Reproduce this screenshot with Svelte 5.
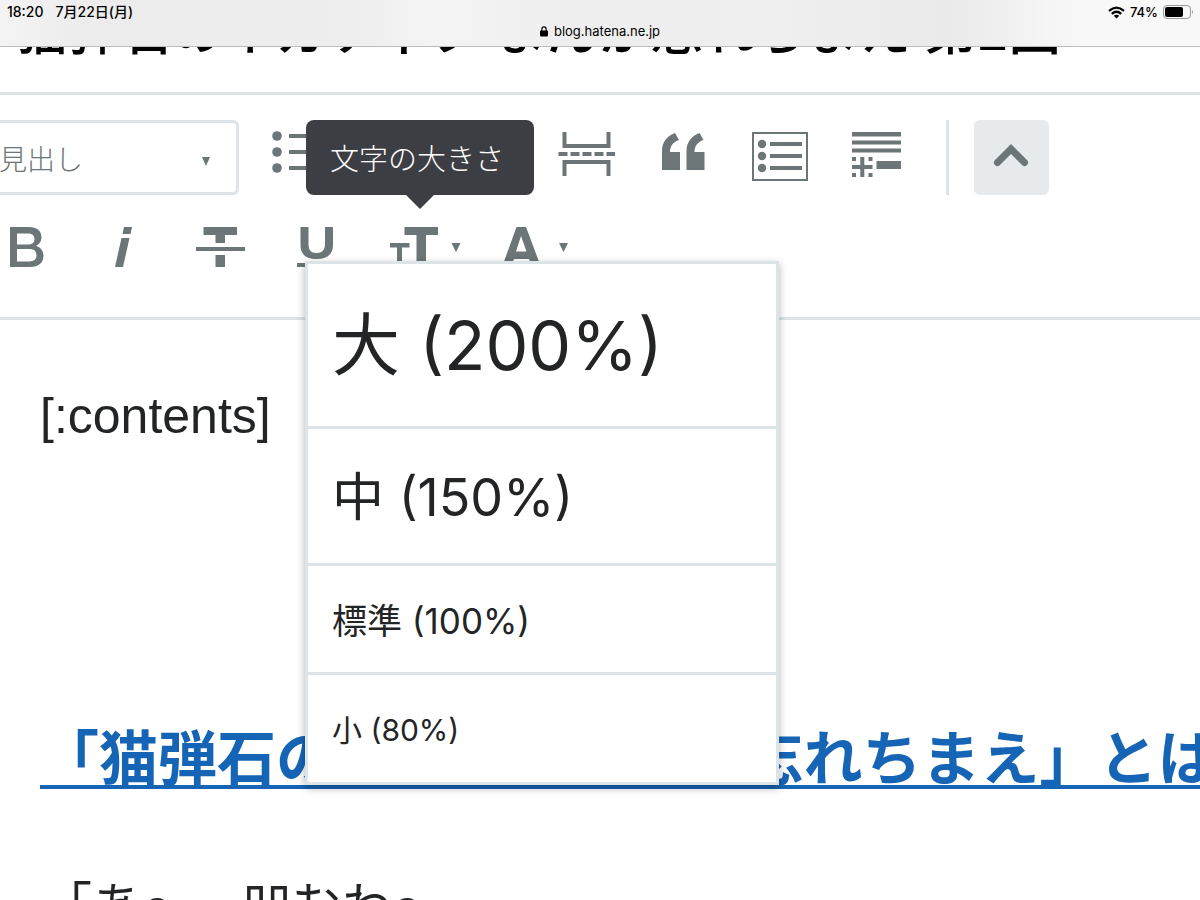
<script lang="ts">
  const sizes = [
    { label: '大 (200%)', cls: 'large' },
    { label: '中 (150%)', cls: 'medium' },
    { label: '標準 (100%)', cls: 'normal' },
    { label: '小 (80%)', cls: 'small' }
  ];
</script>

<div class="page">
  <header class="browser">
    <div class="status">
      <div class="clock"><span>18:20</span><span>7月22日(月)</span></div>
      <div class="power">
        <svg width="17" height="13" viewBox="0 0 17 13" aria-hidden="true">
          <g fill="none" stroke="#000" stroke-width="2.2">
            <path d="M1 4.9Q8.5 -1.7 16 4.9" />
            <path d="M3.8 7.8Q8.5 3.7 13.2 7.8" />
          </g>
          <path d="M5.8 9.8Q8.5 7.6 11.2 9.8L8.5 12.5Z" />
        </svg>
        <span>74%</span>
        <svg width="31" height="14" viewBox="0 0 31 14" aria-hidden="true">
          <rect x="0.5" y="0.5" width="27" height="13" rx="3.5" fill="none" stroke="#999" />
          <rect x="2" y="2" width="18" height="10" rx="2" />
          <path d="M29 5v4q2-2 0-4" fill="#999" />
        </svg>
      </div>
    </div>
    <div class="address">
      <svg width="8" height="11" viewBox="0 0 8 11" aria-hidden="true">
        <rect y="4.5" width="8" height="6" rx="1" />
        <path d="M1.9 5V3a2.1 2.2 0 0 1 4.2 0v2" fill="none" stroke="#000" stroke-width="1.2" />
      </svg>
      <span>blog.hatena.ne.jp</span>
    </div>
  </header>

  <div class="title"><h1>猫弾石のネガティブ まんが忘れちまえ 第2回</h1></div>

  <div class="toolbar">
    <div class="row">
      <button class="format"><span>見出し</span>
        <svg width="10" height="10" viewBox="0 0 10 10" aria-hidden="true"><path d="M1 0h8L5 9z" /></svg>
      </button>
      <button class="tool list" aria-label="リスト">
        <svg width="50" height="44" viewBox="0 0 50 44">
          <circle cx="5" cy="5" r="4.8" /><circle cx="5" cy="21" r="4.8" /><circle cx="5" cy="37" r="4.8" />
          <path d="M17 3h32v4H17zM17 19h32v4H17zM17 35h32v4H17z" />
        </svg>
      </button>
      <button class="tool more" aria-label="続きを読む">
        <svg width="58" height="46" viewBox="0 0 58 46">
          <path d="M6.5 1v14h44V1M6.5 45V31h44v14" fill="none" stroke="#6c7577" stroke-width="4" />
          <path d="M.5 21h9v4h-9zM12.5 21h9v4h-9zM24.5 21h9v4h-9zM36.5 21h9v4h-9zM48.5 21h8.5v4h-8.5z" />
        </svg>
      </button>
      <button class="tool quote" aria-label="引用">
        <svg width="44" height="38" viewBox="0 0 44 38">
          <path d="M0 37V18C0 9 5 3 13 0l4 7C11 9 8 13 8 19h10v18z" />
          <path d="M24.5 37V18c0-9 5-15 13-18l4 7c-6 2-9 6-9 12h10v18z" />
        </svg>
      </button>
      <button class="tool contents" aria-label="目次">
        <svg width="56" height="49" viewBox="0 0 56 49">
          <rect x="1" y="1" width="54" height="47" fill="none" stroke="#6c7577" stroke-width="2" />
          <circle cx="10" cy="12" r="4.2" /><circle cx="10" cy="24" r="4.2" /><circle cx="10" cy="36" r="4.2" />
          <path d="M18 10h32v4H18zM18 22h32v4H18zM18 34h32v4H18z" />
        </svg>
      </button>
      <button class="tool note" aria-label="脚注">
        <svg width="49" height="46" viewBox="0 0 49 46">
          <path d="M0 0h49v4.5H0zM0 8.5h49v4H0zM0 16.5h49v4H0zM24.5 29H49v8H24.5zM0 25h4v4H0zM16.5 25h4v4h-4zM0 41h4v4H0zM16.5 41h4v4h-4zM0 33h20.5v4H0zM8.3 25h4v20h-4z" />
        </svg>
      </button>
      <span class="divider"></span>
      <button class="toggle" aria-label="閉じる">
        <svg width="37" height="27" viewBox="0 0 37 27">
          <path d="M4.5 18.5 18 5 31.5 18.5" fill="none" stroke="#6c7577" stroke-width="7" stroke-linecap="round" />
        </svg>
      </button>
    </div>
    <div class="row second">
      <button class="tool bold" aria-label="太字">
        <svg width="35" height="41" viewBox="0 0 35 41"><path fill-rule="evenodd" d="M0 0h18.500C27 0 31.500 4 31.500 10.200c0 4-2 7-5.500 8.600 4.500 1.500 7.500 5 7.500 10C33.500 36 28.500 40 20 40H0zM7 6.500v11h10.500c4.500 0 7-1.800 7-5.500s-2.500-5.500-7-5.500zM7 22v12.500h12c5 0 7.500-2 7.500-6.200 0-4.300-2.500-6.300-7.500-6.300z" /></svg>
      </button>
      <button class="tool italic" aria-label="斜体">
        <svg width="17" height="41" viewBox="0 0 17 41"><path d="M9 0h8l-1.500 7h-8zM6.500 11h8L8 40H0z" /></svg>
      </button>
      <button class="tool strike" aria-label="取り消し線">
        <svg width="49" height="41" viewBox="0 0 49 41"><path d="M7.500 0H41v8H29v8h-9.500V8h-12zM0 20h49v4H0zM19.500 28H29v12h-9.500z" /></svg>
      </button>
      <button class="tool underline" aria-label="下線">
        <svg width="41" height="41" viewBox="0 0 41 41"><path d="M3.500 0h8v17c0 6 2.500 9 8 9s8.500-3 8.500-9V0h8v18c0 9-5.500 14-16.500 14s-16-5-16-14zM0 36h41v4H0z" /></svg>
      </button>
      <button class="tool size" aria-label="文字の大きさ" aria-expanded="true">
        <svg width="72" height="41" viewBox="0 0 72 41"><path d="M14.500 0H48v8H36v32h-9.500V8h-12zM0 16h19.500v4.500H12V40H7V20.500H0zM61.500 16h9L66 25z" /></svg>
      </button>
      <button class="tool color" aria-label="文字色">
        <svg width="64" height="41" viewBox="0 0 64 41"><path fill-rule="evenodd" d="M11.500 0h9.500l15 40h-9l-3-8H9l-3 8H-3zM16 9l-5 15.500h10.500zM54 16h9L58.500 25z" /></svg>
      </button>
    </div>

    <div class="tooltip" role="tooltip">文字の大きさ</div>
    <div class="menu">
      {#each sizes as size}
        <button class={size.cls}>{size.label}</button>
      {/each}
    </div>
  </div>

  <main>
    <p class="toc">[:contents]</p>
    <h2><a href="#about">「猫弾石のネガティブなど忘れちまえ」とは</a></h2>
    <p class="body">「あ～、凹むわ～</p>
  </main>
</div>

<style>
  :global(body) { background: #fff; }
  * { box-sizing: border-box; }
  .page {
    height: 100vh;
    overflow: hidden;
    color: #222425;
    font-family: Inter, "Noto Sans CJK JP", sans-serif;
  }
  button { font: inherit; color: inherit; border: 0; background: none; padding: 0; margin: 0; cursor: pointer; }
  svg { display: block; flex: none; overflow: visible; }
  .browser {
    position: relative;
    z-index: 1;
    height: 47px;
    border-bottom: 1px solid #bcbcbc;
    background: linear-gradient(90deg, #f4f4f4 0, #ececec 7%, #eeeeee 29%, #f4f4f4 36%, #eeeeee 48%, #efefef 65%, #eaeaea 79%, #f8f8f8 90%);
    color: #000;
  }
  .status { display: flex; justify-content: space-between; padding: 2px 6px 0 7px; font-size: 13px; line-height: 20px; font-weight: 500; }
  .clock { display: flex; gap: 12px; font-size: 14px; }
  .power { display: flex; align-items: center; gap: 5px; }
  .address { display: flex; justify-content: center; align-items: center; gap: 6px; font-size: 13px; line-height: 18px; }
  .title { display: flex; height: 45px; padding-left: 16px; }
  h1 { margin: -45px 0 0; font-size: 52px; line-height: 60px; font-weight: 500; color: #000; white-space: nowrap; }
  .toolbar { position: relative; border: solid #dce4e8; border-width: 3px 0; padding: 25px 0 49px; }
  .row { display: flex; align-items: flex-start; }
  .tool { fill: #6c7577; flex: none; }
  .format {
    display: flex; align-items: center; justify-content: space-between;
    width: 240px; height: 75px; margin-left: -1px; padding: 0 25px 0 0;
    border: 3px solid #dce4e8; border-left: 0; border-radius: 0 6px 6px 0;
    color: #6c7577; fill: #6c7577; font-size: 28px; font-weight: 300;
  }
  .format svg { margin-top: 8px; }
  .list { margin: 11px 0 0 33px; }
  .more { margin: 11px 0 0 236px; }
  .quote { margin: 13px 0 0 46px; }
  .contents { margin: 12px 0 0 46px; }
  .note { margin: 12px 0 0 44px; }
  .divider { width: 3px; height: 75px; margin-left: 45px; background: #dce4e8; }
  .toggle { display: flex; align-items: center; justify-content: center; width: 75px; height: 75px; margin-left: 25px; border-radius: 6px; background: #e6eaed; }
  .second { margin-top: 32px; padding-left: 10px; }
  .italic { margin-left: 70px; }
  .strike { margin-left: 64px; }
  .underline { margin-left: 52px; }
  .size { margin-left: 52px; }
  .color { margin-left: 43px; }
  .tooltip {
    position: absolute; left: 306px; top: 25px; width: 228px; height: 75px;
    padding: 2px 0 0 24px;
    border-radius: 8px; background: #3d3e43; color: #fff;
    font-size: 29px; font-weight: 300; line-height: 75px; white-space: nowrap;
  }
  .tooltip::after { content: ""; position: absolute; left: 99px; top: 74px; border: 15px solid transparent; border-top-color: #3d3e43; border-bottom: 0; }
  .menu {
    position: absolute; left: 305px; top: 166px; z-index: 1; width: 474px;
    display: flex; flex-direction: column;
    border: 3px solid #dce4e8; background: #fff; box-shadow: 0 3px 8px rgb(0 0 0 / 30%);
  }
  .menu button { padding: 4px 24px 0; text-align: left; font-weight: 400; white-space: nowrap; }
  .menu button + button { border-top: 3px solid #dce4e8; }
  .menu .large { padding-top: 0; font-size: 68px; line-height: 162px; }
  .menu .medium { font-size: 52px; line-height: 130px; }
  .menu .normal { font-size: 35px; line-height: 102px; }
  .menu .small { font-size: 30px; line-height: 103px; }
  main { padding: 60px 0 0 40px; white-space: nowrap; }
  p, h2 { margin: 0; }
  .toc { font-family: "Liberation Sans", "Noto Sans CJK JP", sans-serif; font-size: 50px; line-height: 72px; }
  h2 { margin-top: 268px; border-bottom: 4px solid #1664b5; padding-top: 12px; font-size: 59px; line-height: 53px; font-weight: 700; }
  h2 a { color: #1664b5; text-decoration: none; }
  .body { margin-top: 77px; padding-left: 2px; font-size: 50px; line-height: 80px; }
</style>
